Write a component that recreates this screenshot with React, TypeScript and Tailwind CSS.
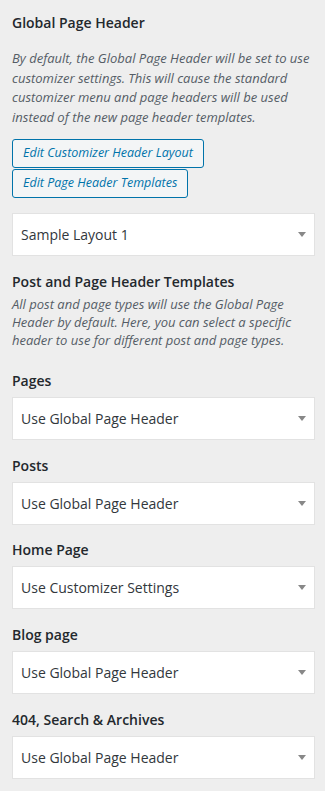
import React from 'react';

const font = { fontFamily: '"Open Sans", "Noto Sans", Arial, sans-serif' };

const Caret = () => (
  <svg width="8" height="5" viewBox="0 0 8 5" className="shrink-0">
    <path d="M0 0 L8 0 L4 5 Z" fill="#888888" />
  </svg>
);

const SelectBox = ({ value }: { value: string }) => (
  <div className="flex h-[43px] items-center justify-between border border-[#e2e2e2] bg-white pl-[8px] pr-[8px]">
    <span className="text-[14px] text-[#32373c]">{value}</span>
    <Caret />
  </div>
);

const Field = ({ label, value }: { label: string; value: string }) => (
  <div className="mb-[15.7px]">
    <div className="mb-[6px] text-[14px] font-semibold leading-[20px] text-[#23282d]">{label}</div>
    <SelectBox value={value} />
  </div>
);

const fields = [
  { label: 'Pages', value: 'Use Global Page Header' },
  { label: 'Posts', value: 'Use Global Page Header' },
  { label: 'Home Page', value: 'Use Customizer Settings' },
  { label: 'Blog page', value: 'Use Global Page Header' },
  { label: '404, Search & Archives', value: 'Use Global Page Header' },
];

export default function App() {
  return (
    <div style={font} className="min-h-[791px] w-[325px] bg-[#eeeeee] pl-[12px] pr-[10px] pt-[13px]">
      <div className="text-[14px] font-semibold leading-[20px] text-[#23282d]">Global Page Header</div>

      <p className="mt-[16px] text-[13px] italic leading-[19.7px] text-[#555d66]">
        By default, the Global Page Header will be set to use customizer settings. This will cause the standard customizer menu and page headers will be used instead of the new page header templates.
      </p>

      <div className="mt-[11px] flex flex-col items-start gap-[1px]">
        <button className="flex h-[29px] w-[192px] items-center whitespace-nowrap rounded-[3px] border border-[#0073aa] bg-[#f3f5f6] px-[10px] text-[12.5px] italic text-[#0073aa]">
          Edit Customizer Header Layout
        </button>
        <button className="flex h-[29px] w-[176px] items-center whitespace-nowrap rounded-[3px] border border-[#0073aa] bg-[#f3f5f6] px-[10px] text-[12.5px] italic text-[#0073aa]">
          Edit Page Header Templates
        </button>
      </div>

      <div className="mt-[15px]">
        <SelectBox value="Sample Layout 1" />
      </div>

      <div className="mt-[16px] text-[14px] font-semibold leading-[20px] text-[#23282d]">Post and Page Header Templates</div>
      <p className="mt-[3px] text-[13px] italic leading-[18px] text-[#555d66]">
        All post and page types will use the Global Page Header by default. Here, you can select a specific header to use for different post and page types.
      </p>

      <div className="mt-[22px]">
        {fields.map((f) => (
          <Field key={f.label} label={f.label} value={f.value} />
        ))}
      </div>
    </div>
  );
}
